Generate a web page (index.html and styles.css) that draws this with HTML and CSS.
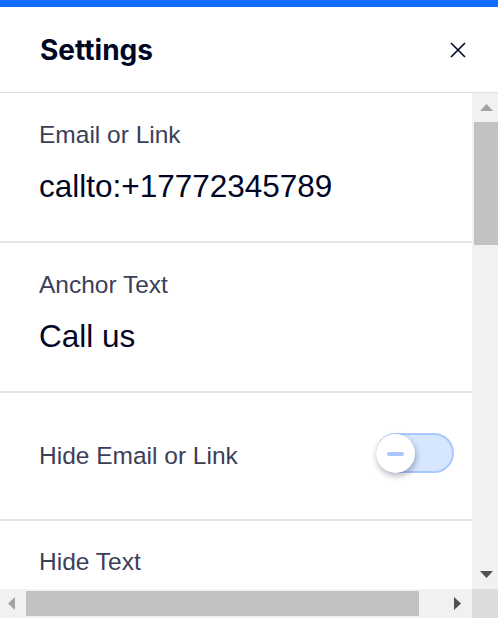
FILE: index.html
```html
<!DOCTYPE html>
<html lang="en">
<head>
<meta charset="utf-8">
<title>Settings</title>
<link rel="stylesheet" href="styles.css">
</head>
<body>
<div class="topbar"></div>
<header class="header">
  <h1 class="title">Settings</h1>
  <button class="close" aria-label="Close">
    <svg width="16" height="16" viewBox="0 0 16 16"><path d="M1 1L15 15M15 1L1 15" stroke="#000624" stroke-width="1.6" fill="none"/></svg>
  </button>
</header>
<div class="panel">
  <div class="content">
    <section class="field">
      <div class="label">Email or Link</div>
      <div class="value">callto:+17772345789</div>
    </section>
    <section class="field">
      <div class="label">Anchor Text</div>
      <div class="value">Call us</div>
    </section>
    <section class="field toggle-row">
      <div class="label">Hide Email or Link</div>
      <div class="toggle">
        <div class="knob"><span class="minus"></span></div>
      </div>
    </section>
    <section class="field last">
      <div class="label">Hide Text</div>
    </section>
  </div>
  <div class="vbar">
    <div class="vbtn"><svg width="13" height="7" viewBox="0 0 13 7"><polygon points="0,7 13,7 6.5,0" fill="#a3a3a3"/></svg></div>
    <div class="vtrack"><div class="vthumb"></div></div>
    <div class="vbtn"><svg width="13" height="7" viewBox="0 0 13 7"><polygon points="0,0 13,0 6.5,7" fill="#505050"/></svg></div>
  </div>
  <div class="hbar">
    <div class="hbtn left"><svg width="7" height="13" viewBox="0 0 7 13"><polygon points="7,0 7,13 0,6.5" fill="#a3a3a3"/></svg></div>
    <div class="htrack"><div class="hthumb"></div></div>
    <div class="hbtn right"><svg width="7" height="13" viewBox="0 0 7 13"><polygon points="0,0 0,13 7,6.5" fill="#505050"/></svg></div>
  </div>
  <div class="corner"></div>
</div>
</body>
</html>
```
FILE: styles.css
```css
html, body {
  margin: 0;
  padding: 0;
  background: #ffffff;
  overflow: hidden;
  width: 498px;
  height: 618px;
}
body {
  font-family: "Liberation Sans", Arial, sans-serif;
}
.topbar {
  height: 7px;
  background: #116dff;
}
.header {
  height: 85px;
  border-bottom: 1px solid #e0e0e0;
  display: flex;
  align-items: center;
  justify-content: space-between;
  padding: 0 32px 0 40px;
  box-sizing: content-box;
}
.title {
  margin: 0;
  font-family: Inter, "Noto Sans", sans-serif;
  font-weight: 700;
  font-size: 28px;
  line-height: normal;
  color: #000624;
}
.close {
  border: 0;
  background: none;
  padding: 0;
  width: 16px;
  height: 16px;
  display: flex;
}
.panel {
  display: grid;
  grid-template-columns: 472px 26px;
  grid-template-rows: 496px 29px;
  height: 525px;
}
.content {
  overflow: hidden;
  background: #ffffff;
}
.field {
  padding: 28px 18px 37px 39px;
  border-bottom: 2px solid #dfe5eb;
}
.label {
  font-size: 24.5px;
  line-height: 28px;
  color: #3b4057;
}
.value {
  margin-top: 19px;
  font-size: 31.5px;
  line-height: 36px;
  color: #000624;
}
.toggle-row {
  padding-top: 0;
  padding-bottom: 0;
  box-sizing: border-box;
  height: 128px;
  display: flex;
  align-items: center;
  justify-content: space-between;
}
.toggle {
  position: relative;
  width: 78px;
  height: 40px;
  box-sizing: border-box;
  border: 2px solid #a8c8ff;
  border-radius: 20px;
  background: #d6e6fe;
  margin-top: -6px;
}
.knob {
  position: absolute;
  left: -2px;
  top: -1px;
  width: 39px;
  height: 39px;
  border-radius: 50%;
  background: #ffffff;
  box-shadow: 1px 3px 6px rgba(0, 6, 36, 0.3);
  display: flex;
  align-items: center;
  justify-content: center;
}
.minus {
  width: 17px;
  height: 4px;
  border-radius: 2px;
  background: #a8c8ff;
  margin-left: -1px;
}
.last {
  padding-top: 27px;
  border-bottom: 0;
}
.vbar {
  background: #f1f1f1;
  display: flex;
  flex-direction: column;
}
.vbtn {
  height: 29px;
  display: flex;
  align-items: center;
  justify-content: center;
  padding-left: 2px;
}
.vtrack {
  flex: 1;
}
.vthumb {
  margin-left: 2px;
  height: 123px;
  background: #c1c1c1;
}
.hbar {
  background: #f1f1f1;
  display: flex;
  align-items: stretch;
}
.hbtn {
  display: flex;
  align-items: center;
  justify-content: center;
}
.hbtn.left {
  width: 23px;
}
.hbtn.right {
  width: 30px;
}
.htrack {
  flex: 1;
  padding: 2px 0 2px 3px;
}
.hthumb {
  width: 393px;
  height: 25px;
  background: #c1c1c1;
}
.corner {
  background: #dcdcdc;
}
```
